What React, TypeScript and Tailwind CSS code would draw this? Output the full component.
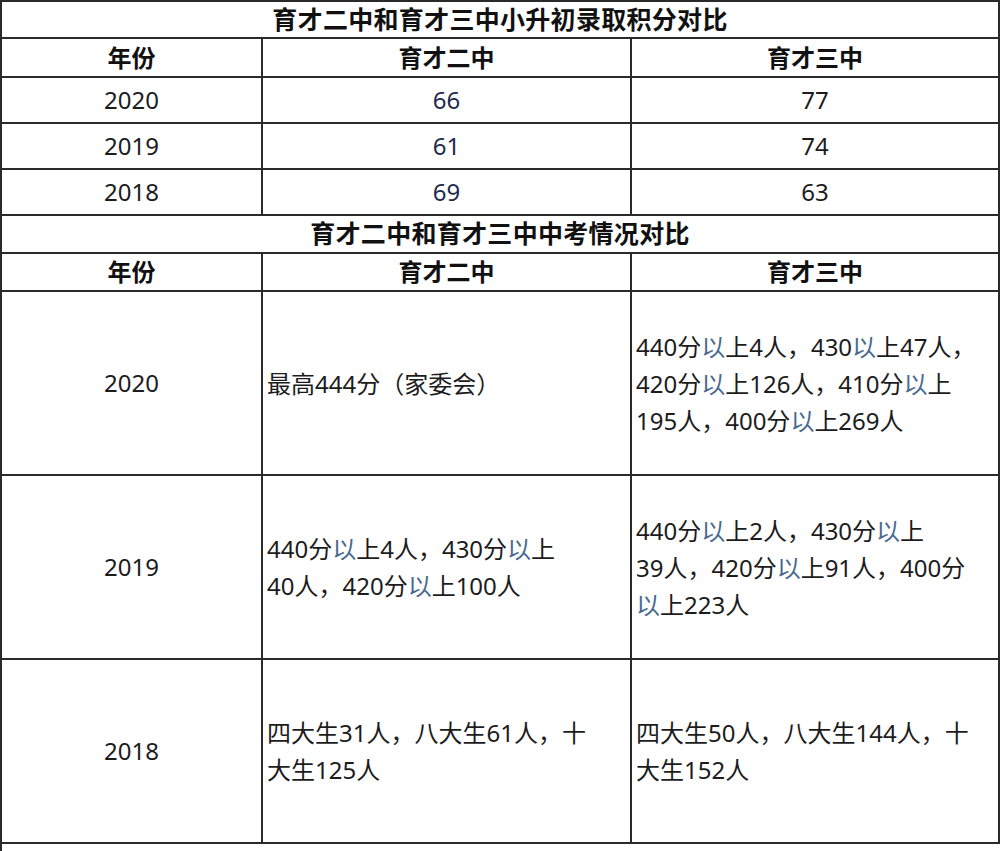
const font = { fontFamily: '"Noto Sans", "Noto Sans CJK SC", sans-serif' };

const line = 'border-r-2 border-b-2 border-[#2a2a2a]';

// "以" renders with a bluish tint in the source screenshot
function Tinted({ text }: { text: string }) {
  const parts = text.split('以');
  return (
    <>
      {parts.map((p, i) => (
        <span key={i}>
          {i > 0 && <span className="text-[#48698f]">以</span>}
          {p}
        </span>
      ))}
    </>
  );
}

function TitleRow({ title, h }: { title: string; h: string }) {
  return (
    <div className={`col-span-3 ${h} ${line} flex items-center justify-center text-[25px] tracking-[0.3px] font-bold text-[#111]`}>
      {title}
    </div>
  );
}

function HeaderRow({ h }: { h: string }) {
  return (
    <>
      {['年份', '育才二中', '育才三中'].map((t) => (
        <div key={t} className={`${h} ${line} flex items-center justify-center text-[24px] font-bold text-[#111]`}>
          {t}
        </div>
      ))}
    </>
  );
}

const scores = [
  { year: '2020', a: '66', b: '77' },
  { year: '2019', a: '61', b: '74' },
  { year: '2018', a: '69', b: '63' },
];

const exams = [
  {
    year: '2020',
    a: ['最高444分（家委会）'],
    b: ['440分以上4人，430以上47人，', '420分以上126人，410分以上', '195人，400分以上269人'],
  },
  {
    year: '2019',
    a: ['440分以上4人，430分以上', '40人，420分以上100人'],
    b: ['440分以上2人，430分以上', '39人，420分以上91人，400分', '以上223人'],
  },
  {
    year: '2018',
    a: ['四大生31人，八大生61人，十', '大生125人'],
    b: ['四大生50人，八大生144人，十', '大生152人'],
  },
];

function TextCell({ lines }: { lines: string[] }) {
  return (
    <div className={`h-[184px] ${line} flex flex-col justify-center pl-[4px] text-[24px] leading-[37px] text-[#1c1c1c]`}>
      {lines.map((l) => (
        <div key={l} className="whitespace-nowrap">
          <Tinted text={l} />
        </div>
      ))}
    </div>
  );
}

export default function App() {
  return (
    <div className="w-[1000px] h-[851px] overflow-hidden bg-white" style={font}>
      <div className="grid grid-cols-[261px_369px_368px] border-l-2 border-t-2 border-[#2a2a2a] w-[1000px]">
        <TitleRow title="育才二中和育才三中小升初录取积分对比" h="h-[37px]" />
        <HeaderRow h="h-[39px]" />
        {scores.map((r) => (
          <div key={r.year} className="contents">
            <div className={`h-[46px] ${line} flex items-center justify-center text-[24px] text-[#1c1c1c]`}>{r.year}</div>
            <div className={`h-[46px] ${line} flex items-center justify-center text-[24px] text-[#1f2b4d]`}>{r.a}</div>
            <div className={`h-[46px] ${line} flex items-center justify-center text-[24px] text-[#1c1c1c]`}>{r.b}</div>
          </div>
        ))}
        <TitleRow title="育才二中和育才三中中考情况对比" h="h-[38px]" />
        <HeaderRow h="h-[38px]" />
        {exams.map((r) => (
          <div key={r.year} className="contents">
            <div className={`h-[184px] ${line} flex items-center justify-center text-[24px] text-[#1c1c1c]`}>{r.year}</div>
            <TextCell lines={r.a} />
            <TextCell lines={r.b} />
          </div>
        ))}
        <div className="col-span-3 h-[40px]" />
      </div>
    </div>
  );
}
